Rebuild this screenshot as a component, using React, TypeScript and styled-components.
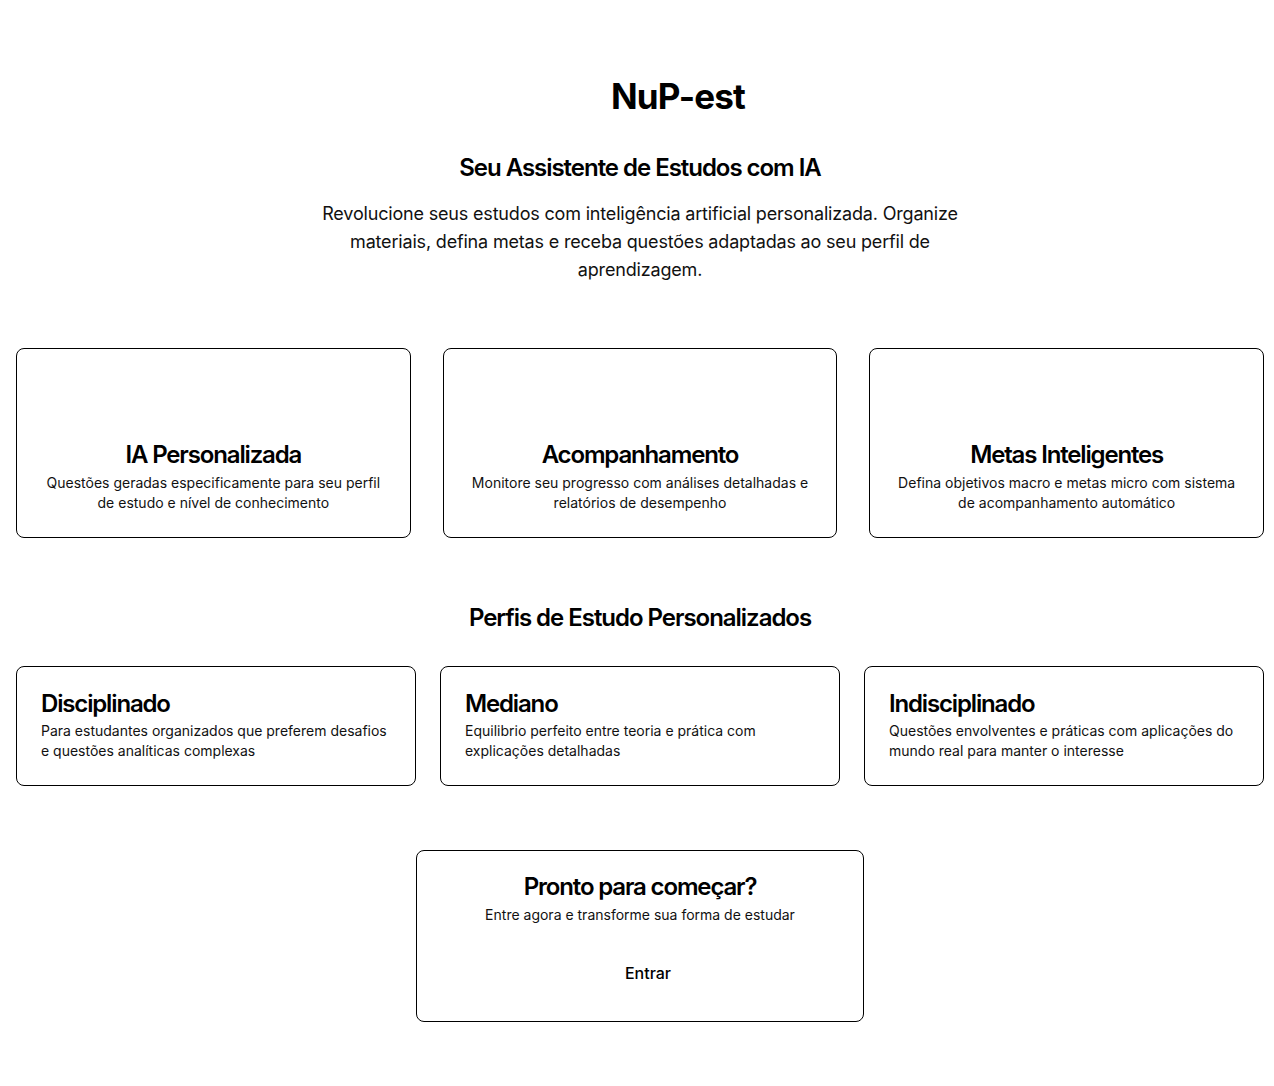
import React from "react";
import styled, { createGlobalStyle } from "styled-components";

const GlobalStyle = createGlobalStyle`
  * { box-sizing: border-box; }
  html, body { margin: 0; padding: 0; background: #ffffff; }
  body {
    font-family: Inter, "Noto Sans", "Liberation Sans", sans-serif;
    color: #0a0a0a;
    -webkit-font-smoothing: antialiased;
  }
`;

const Page = styled.main`
  padding: 76px 10px 64px 16px;
`;

const Container = styled.div`
  max-width: 1248px;
  display: flex;
  flex-direction: column;
  align-items: center;
`;

const Hero = styled.header`
  display: flex;
  flex-direction: column;
  align-items: center;
  text-align: center;
`;

const BrandRow = styled.div`
  display: flex;
  align-items: center;
  gap: 12px;
`;

const LogoSlot = styled.span`
  display: block;
  width: 64px;
  height: 40px;
`;

const Brand = styled.h1`
  margin: 0;
  font-size: 35px;
  line-height: 40px;
  font-weight: 700;
  letter-spacing: -0.025em;
  color: #000;
`;

const SectionTitle = styled.h2<{ $top: number }>`
  margin: ${(p) => p.$top}px 0 0;
  font-size: 24px;
  line-height: 32px;
  font-weight: 600;
  letter-spacing: -0.043em;
  color: #000;
`;

const Lead = styled.p`
  margin: 16px 0 0;
  max-width: 672px;
  font-size: 18px;
  line-height: 28px;
  font-weight: 400;
  letter-spacing: -0.01em;
  color: #111;
`;

const Grid = styled.section<{ $gap: number; $top: number }>`
  width: 100%;
  margin-top: ${(p) => p.$top}px;
  display: grid;
  grid-template-columns: repeat(3, 1fr);
  gap: ${(p) => p.$gap}px;
`;

const Card = styled.article<{ $center?: boolean }>`
  border: 1px solid #000;
  border-radius: 8px;
  background: #fff;
  padding: 24px;
  display: flex;
  flex-direction: column;
  align-items: ${(p) => (p.$center ? "center" : "flex-start")};
  text-align: ${(p) => (p.$center ? "center" : "left")};
`;

const ProfileCard = styled(Card)`
  padding-top: 23px;
`;

const IconSlot = styled.span`
  display: block;
  width: 48px;
  height: 52px;
  margin-bottom: 16px;
`;

const CardTitle = styled.h3<{ $gap: number }>`
  margin: 0 0 ${(p) => p.$gap}px;
  font-size: 24px;
  line-height: 28px;
  font-weight: 600;
  letter-spacing: -0.048em;
  color: #000;
`;

const CardText = styled.p`
  margin: 0;
  font-size: 14px;
  line-height: 20px;
  color: #111;
`;

const CtaCard = styled(Card)`
  width: 448px;
  margin-top: 64px;
  padding: 22px 24px 26px;
`;

const EnterButton = styled.button`
  margin-top: 26px;
  height: 44px;
  padding: 0 16px 0 32px;
  border: none;
  background: transparent;
  font-family: inherit;
  font-size: 16px;
  font-weight: 500;
  color: #000;
  cursor: pointer;
`;

const features = [
  {
    title: "IA Personalizada",
    text: "Questões geradas especificamente para seu perfil de estudo e nível de conhecimento",
  },
  {
    title: "Acompanhamento",
    text: "Monitore seu progresso com análises detalhadas e relatórios de desempenho",
  },
  {
    title: "Metas Inteligentes",
    text: "Defina objetivos macro e metas micro com sistema de acompanhamento automático",
  },
];

const profiles = [
  {
    title: "Disciplinado",
    text: "Para estudantes organizados que preferem desafios e questões analíticas complexas",
  },
  {
    title: "Mediano",
    text: "Equilibrio perfeito entre teoria e prática com explicações detalhadas",
  },
  {
    title: "Indisciplinado",
    text: "Questões envolventes e práticas com aplicações do mundo real para manter o interesse",
  },
];

export default function App() {
  return (
    <>
      <GlobalStyle />
      <Page>
        <Container>
          <Hero>
            <BrandRow>
              <LogoSlot aria-hidden="true" />
              <Brand>NuP-est</Brand>
            </BrandRow>
            <SectionTitle $top={36}>Seu Assistente de Estudos com IA</SectionTitle>
            <Lead>
              Revolucione seus estudos com inteligência artificial personalizada. Organize
              materiais, defina metas e receba questões adaptadas ao seu perfil de
              aprendizagem.
            </Lead>
          </Hero>

          <Grid $gap={32} $top={64}>
            {features.map((f) => (
              <Card key={f.title} $center>
                <IconSlot aria-hidden="true" />
                <CardTitle $gap={4}>{f.title}</CardTitle>
                <CardText>{f.text}</CardText>
              </Card>
            ))}
          </Grid>

          <SectionTitle $top={64}>Perfis de Estudo Personalizados</SectionTitle>

          <Grid $gap={24} $top={32}>
            {profiles.map((p) => (
              <ProfileCard key={p.title}>
                <CardTitle $gap={3}>{p.title}</CardTitle>
                <CardText>{p.text}</CardText>
              </ProfileCard>
            ))}
          </Grid>

          <CtaCard $center>
            <CardTitle $gap={4}>Pronto para começar?</CardTitle>
            <CardText>Entre agora e transforme sua forma de estudar</CardText>
            <EnterButton type="button">Entrar</EnterButton>
          </CtaCard>
        </Container>
      </Page>
    </>
  );
}
